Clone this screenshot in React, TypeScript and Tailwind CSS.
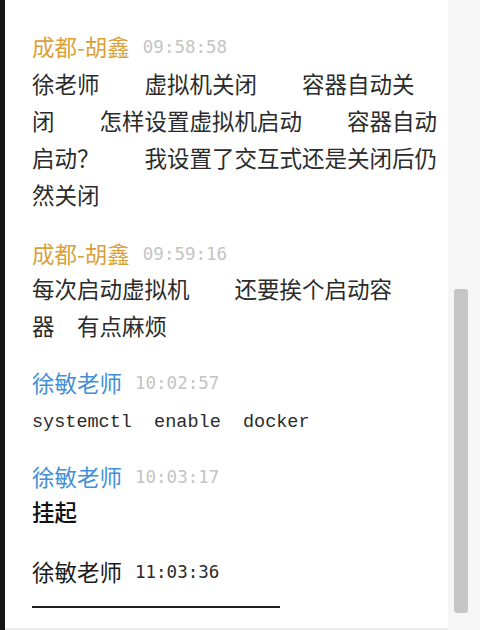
const cjk = "font-['Noto_Sans_CJK_SC',sans-serif]";

const Name = ({
  name,
  time,
  tone,
  className = "",
}: {
  name: string;
  time: string;
  tone: "orange" | "blue" | "dark";
  className?: string;
}) => {
  const nameColor =
    tone === "orange"
      ? "text-[#d9a13a]"
      : tone === "blue"
      ? "text-[#4390d6]"
      : "text-[#1a1a1a]";
  const timeColor = tone === "dark" ? "text-[#2a2a2a]" : "text-[#c4c4c4]";
  return (
    <div className={`flex items-center h-[30px] ${className}`}>
      <span className={`${cjk} text-[22.5px] leading-[30px] ${nameColor}`}>
        {name}
      </span>
      <span
        className={`ml-[13px] mt-[2px] font-['DejaVu_Sans_Mono',monospace] text-[17.5px] leading-[30px] ${timeColor}`}
      >
        {time}
      </span>
    </div>
  );
};

const Body = ({ lines, className = "" }: { lines: string[]; className?: string }) => (
  <div
    className={`${cjk} text-[22.5px] leading-[37px] text-[#2b2b2b] whitespace-pre ${className}`}
  >
    {lines.map((line, i) => (
      <div key={i}>{line}</div>
    ))}
  </div>
);

export default function App() {
  return (
    <div className="flex w-[480px] h-[630px] bg-white overflow-hidden">
      {/* left edge */}
      <div className="w-[5px] h-full bg-[#151515]" />

      {/* messages */}
      <div className="flex-1 flex flex-col pl-[27px] pt-[31px] border-b-2 border-[#ececec]">
        <Name name="成都-胡鑫" time="09:58:58" tone="orange" />
        <Body
          className="mt-[4px]"
          lines={[
            "徐老师　　虚拟机关闭　　容器自动关",
            "闭　　怎样设置虚拟机启动　　容器自动",
            "启动？　　我设置了交互式还是关闭后仍",
            "然关闭",
          ]}
        />

        <Name name="成都-胡鑫" time="09:59:16" tone="orange" className="mt-[25px]" />
        <Body
          className="mt-[2px]"
          lines={["每次启动虚拟机　　还要挨个启动容", "器　有点麻烦"]}
        />

        <Name name="徐敏老师" time="10:02:57" tone="blue" className="mt-[23px]" />
        <div className="mt-[11px] h-[30px] leading-[30px] font-['Liberation_Mono',monospace] text-[18.5px] text-[#2b2b2b] whitespace-pre">
          systemctl  enable  docker
        </div>

        <Name name="徐敏老师" time="10:03:17" tone="blue" className="mt-[23px]" />
        <Body className="mt-[2px] text-[#111] font-medium" lines={["挂起"]} />

        <Name name="徐敏老师" time="11:03:36" tone="dark" className="mt-[26px]" />
        <div className="mt-[20px] w-[248px] h-[2px] bg-[#1e1e1e]" />
      </div>

      {/* scrollbar */}
      <div className="w-[32px] h-full bg-[#f6f6f6] pt-[289px] pl-[6px]">
        <div className="w-[14px] h-[324px] bg-[#c6c6c6] rounded-[3px]" />
      </div>
    </div>
  );
}
